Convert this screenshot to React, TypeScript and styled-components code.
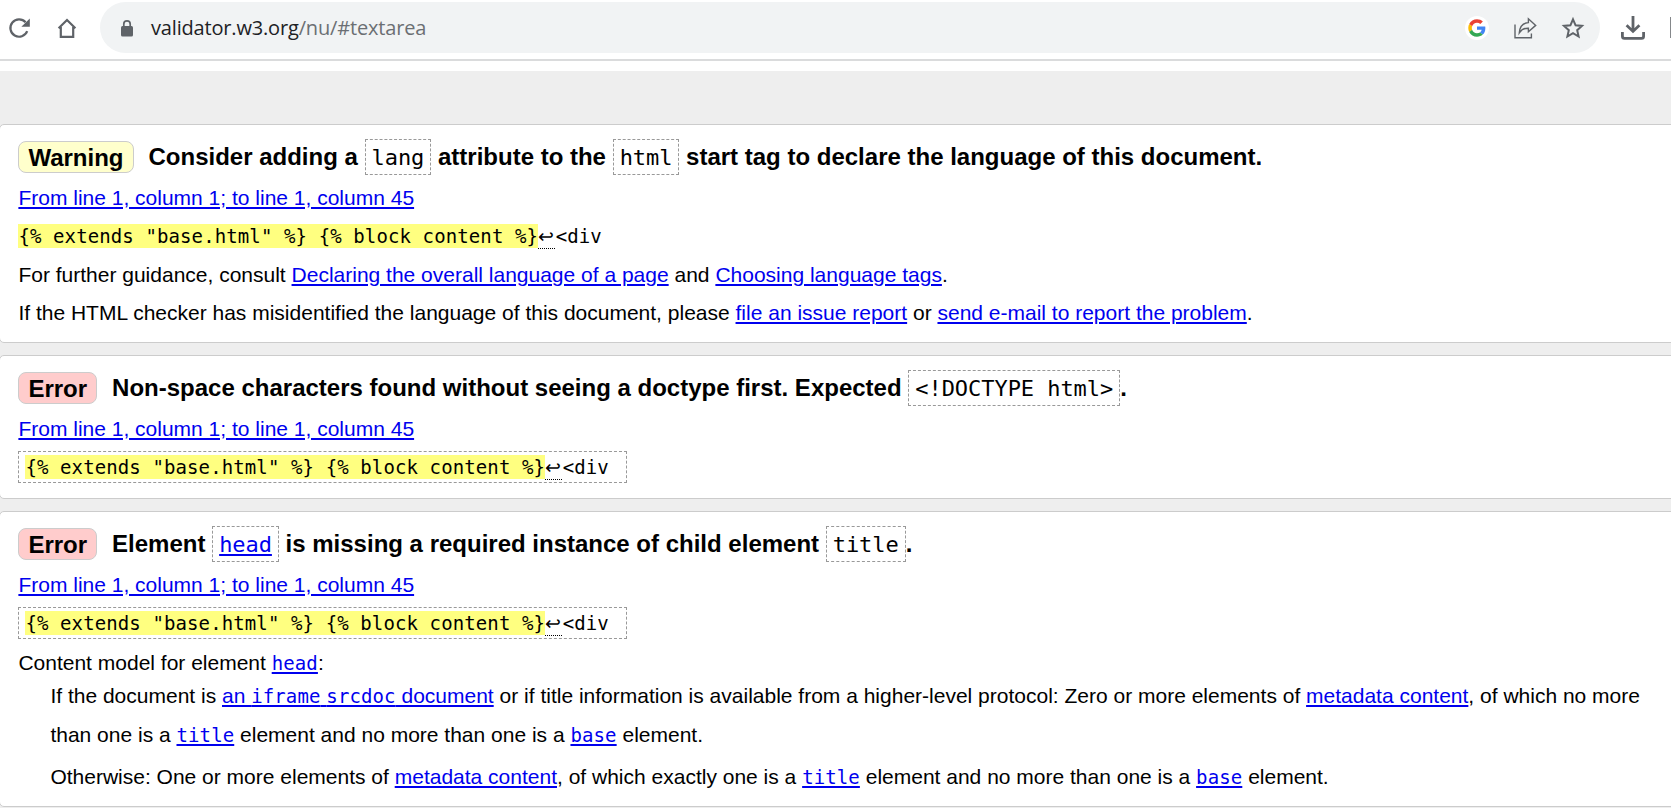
import React from "react";
import styled, { createGlobalStyle } from "styled-components";

const Global = createGlobalStyle`
  html, body { margin: 0; padding: 0; }
  body {
    background: #eee;
    color: #000;
    font-family: "Liberation Sans", Arial, sans-serif;
    font-size: 21px;
    overflow: hidden;
  }
`;

const Toolbar = styled.header`
  display: flex;
  align-items: center;
  height: 59px;
  box-sizing: border-box;
  padding: 2px 0 6px 7px;
  background: #fff;
  overflow: hidden;
`;

const Divider = styled.div`
  height: 10px;
  border-top: 2px solid #dadbdc;
  background: #fff;
`;

const ToolIcon = styled.svg<{ $gap?: number }>`
  display: block;
  flex: none;
  margin-left: ${(p) => p.$gap ?? 0}px;
`;

const AddressBar = styled.div`
  display: flex;
  align-items: center;
  flex: none;
  width: 1500px;
  height: 51px;
  margin-left: 22px;
  padding: 0 15px 0 18px;
  box-sizing: border-box;
  border-radius: 26px;
  background: #f1f3f4;
`;

const Url = styled.div`
  flex: 1;
  margin-left: 17px;
  font-family: "Open Sans", "Noto Sans", sans-serif;
  font-size: 20px;
  line-height: 50px;
  color: #202124;
  letter-spacing: -0.17px;
`;

const UrlPath = styled.span`
  color: #6b6f73;
`;

const NextButtonEdge = styled.span`
  flex: none;
  width: 1px;
  height: 21px;
  margin-left: 25px;
  background: #85888b;
`;

const Results = styled.main`
  display: flex;
  flex-direction: column;
  gap: 12px;
  padding-top: 53px;
`;

const Message = styled.section<{ $bottom: number }>`
  margin: 0 -10px 0 -1px;
  padding: 7px 27px ${(p) => p.$bottom}px 18.4px;
  border: 1px solid #ccc;
  border-radius: 5px;
  background: #fff;
`;

const Heading = styled.h2`
  margin: 0;
  height: 50px;
  font-size: 24px;
  line-height: 50px;
  font-weight: bold;
  white-space: nowrap;
`;

const Badge = styled.span<{ $kind: "warning" | "error" }>`
  display: inline-block;
  box-sizing: border-box;
  height: 32px;
  margin-right: 15px;
  padding: 0 9px;
  border: 1px solid #ccc;
  border-radius: 8px;
  line-height: 31px;
  vertical-align: -1px;
  background: ${(p) => (p.$kind === "warning" ? "#ffc" : "#fcc")};
`;

const HeadingCode = styled.code`
  display: inline-block;
  box-sizing: border-box;
  height: 36px;
  padding: 1px 6px 0;
  border: 1px dashed #999;
  font: 22px/34px "DejaVu Sans Mono", monospace;
  letter-spacing: -0.05px;
`;

const Link = styled.a`
  color: #00e;
  text-decoration: underline;
  text-decoration-thickness: 2px;
  text-underline-offset: 2px;
`;

const Location = styled.p`
  margin: 0;
  line-height: 31px;
`;

const Snippet = styled.div<{ $boxed?: boolean }>`
  box-sizing: border-box;
  width: 609px;
  height: ${(p) => (p.$boxed ? 32 : 30)}px;
  margin: ${(p) => (p.$boxed ? "7px 0 0" : "8px 0 5px")};
  padding: ${(p) => (p.$boxed ? "0 6px" : "0")};
  border: ${(p) => (p.$boxed ? "1px dashed #999" : "0")};
  font: 19px/30px "DejaVu Sans Mono", monospace;
  letter-spacing: 0.11px;
  white-space: pre;
`;

const Mark = styled.span`
  display: inline-block;
  height: 24px;
  line-height: 24px;
  background: #ffff80;
`;

const LineBreak = styled.span`
  display: inline-block;
  box-sizing: border-box;
  width: 17px;
  height: 25px;
  margin: 3px 0.6px 0 0;
  border-bottom: 1px dotted #000;
  font-family: "DejaVu Sans", sans-serif;
  font-weight: 200;
  line-height: 24px;
  letter-spacing: 0;
  vertical-align: top;
`;

const Paragraph = styled.p`
  margin: 0;
  line-height: 38px;
`;

const Model = styled.dl`
  margin: 10px 0 0;
`;

const Term = styled.dt`
  line-height: 27px;
`;

const Definition = styled.dd<{ $top?: number }>`
  margin: ${(p) => p.$top ?? 0}px 0 0 32px;
  line-height: 39px;
`;

const Code = styled.code`
  font: 19px/1 "DejaVu Sans Mono", monospace;
  letter-spacing: 0.11px;
`;

const From = () => (
  <Location>
    <Link>From line 1, column 1; to line 1, column 45</Link>
  </Location>
);

const Extract = ({ boxed }: { boxed?: boolean }) => (
  <Snippet $boxed={boxed}>
    <Mark>{'{% extends "base.html" %} {% block content %}'}</Mark>
    <LineBreak>↩</LineBreak>
    {"<div"}
  </Snippet>
);

const CodeLink = ({ children }: { children: React.ReactNode }) => (
  <Link>
    <Code>{children}</Code>
  </Link>
);

const Chrome = () => (
  <Toolbar>
    <ToolIcon width="24" height="24" viewBox="0 0 24 24">
      <path d="M20.2 15.2A8.7 8.7 0 1 1 18.6 6.2" fill="none" stroke="#5f6368" strokeWidth="2.2" />
      <path d="M22.8 2.4V10.8H14.4Z" fill="#5f6368" />
    </ToolIcon>
    <ToolIcon $gap={25} width="22" height="22" viewBox="0 0 22 22">
      <path d="M2.6 11.2 11 3 19.4 11.2M4.8 10V19.8H17.2V10" fill="none" stroke="#5f6368" strokeWidth="2.2" />
    </ToolIcon>
    <AddressBar>
      <ToolIcon $gap={2} width="14" height="18" viewBox="0 0 14 18">
        <rect x="1" y="7" width="12" height="10.5" rx="1.5" fill="#5f6368" />
        <path d="M3.8 8V5a3.2 3.2 0 0 1 6.4 0v3" fill="none" stroke="#5f6368" strokeWidth="1.7" />
      </ToolIcon>
      <Url>
        validator.w3.org<UrlPath>/nu/#textarea</UrlPath>
      </Url>
      <ToolIcon width="24" height="24" viewBox="-9 -9 66 66">
        <circle cx="24" cy="24" r="33" fill="#fff" />
        <path fill="#EA4335" d="M24 9.5c3.54 0 6.71 1.22 9.21 3.6l6.85-6.85C35.9 2.38 30.47 0 24 0 14.62 0 6.51 5.38 2.56 13.22l7.98 6.19C12.43 13.72 17.74 9.5 24 9.5z" />
        <path fill="#4285F4" d="M46.98 24.55c0-1.57-.15-3.09-.38-4.55H24v9.02h12.94c-.58 2.96-2.26 5.48-4.78 7.18l7.73 6c4.51-4.18 7.09-10.36 7.09-17.65z" />
        <path fill="#FBBC05" d="M10.53 28.59c-.48-1.45-.76-2.99-.76-4.59s.27-3.14.76-4.59l-7.98-6.19C.92 16.46 0 20.12 0 24c0 3.88.92 7.54 2.56 10.78l7.97-6.19z" />
        <path fill="#34A853" d="M24 48c6.48 0 11.93-2.13 15.89-5.81l-7.73-6c-2.15 1.45-4.92 2.3-8.16 2.3-6.26 0-11.57-4.22-13.47-9.91l-7.98 6.19C6.51 42.62 14.62 48 24 48z" />
      </ToolIcon>
      <ToolIcon $gap={24} width="24" height="24" viewBox="0 0 24 24">
        <path d="M2 8.5V21.8H18.4V17.5" fill="none" stroke="#5f6368" strokeWidth="1.4" />
        <path d="M6.3 16.8C6.8 10.6 10 7 15.4 6.6V2.8L22.7 9.4 15.4 15.8V12.2C11.2 12 8.6 13.4 6.3 16.8Z" fill="none" stroke="#5f6368" strokeWidth="1.4" />
      </ToolIcon>
      <ToolIcon $gap={24} width="24" height="24" viewBox="0 0 24 24">
        <path d="M12 3.3 14.6 9.3 21 9.9 16.2 14.2 17.6 20.5 12 17.2 6.4 20.5 7.8 14.2 3 9.9 9.4 9.3Z" fill="none" stroke="#5f6368" strokeWidth="2" />
      </ToolIcon>
    </AddressBar>
    <ToolIcon $gap={21} width="24" height="24" viewBox="0 0 24 24">
      <path d="M12 0V15M5.6 9.2 12 15.4 18.4 9.2" fill="none" stroke="#5f6368" strokeWidth="2.8" />
      <path d="M1.4 16V20.3Q1.4 22.4 3.5 22.4H20.5Q22.6 22.4 22.6 20.3V16" fill="none" stroke="#5f6368" strokeWidth="2.8" />
    </ToolIcon>
    <NextButtonEdge />
  </Toolbar>
);

export default function App() {
  return (
    <>
      <Global />
      <Chrome />
      <Divider />
      <Results>
        <Message $bottom={10}>
          <Heading>
            <Badge $kind="warning">Warning</Badge>
            Consider adding a <HeadingCode>lang</HeadingCode> attribute to the{" "}
            <HeadingCode>html</HeadingCode> start tag to declare the language of this document.
          </Heading>
          <From />
          <Extract />
          <Paragraph>
            For further guidance, consult <Link>Declaring the overall language of a page</Link> and{" "}
            <Link>Choosing language tags</Link>.
          </Paragraph>
          <Paragraph>
            If the HTML checker has misidentified the language of this document, please{" "}
            <Link>file an issue report</Link> or <Link>send e-mail to report the problem</Link>.
          </Paragraph>
        </Message>
        <Message $bottom={15}>
          <Heading>
            <Badge $kind="error">Error</Badge>
            Non-space characters found without seeing a doctype first. Expected{" "}
            <HeadingCode>{"<!DOCTYPE html>"}</HeadingCode>.
          </Heading>
          <From />
          <Extract boxed />
        </Message>
        <Message $bottom={10}>
          <Heading>
            <Badge $kind="error">Error</Badge>
            Element{" "}
            <HeadingCode>
              <Link>head</Link>
            </HeadingCode>{" "}
            is missing a required instance of child element <HeadingCode>title</HeadingCode>.
          </Heading>
          <From />
          <Extract boxed />
          <Model>
            <Term>
              Content model for element <CodeLink>head</CodeLink>:
            </Term>
            <Definition>
              If the document is{" "}
              <Link>
                an <Code>iframe</Code> <Code>srcdoc</Code> document
              </Link>{" "}
              or if title information is available from a higher-level protocol: Zero or more elements of{" "}
              <Link>metadata content</Link>, of which no more than one is a <CodeLink>title</CodeLink> element and no
              more than one is a <CodeLink>base</CodeLink> element.
            </Definition>
            <Definition $top={3}>
              Otherwise: One or more elements of <Link>metadata content</Link>, of which exactly one is a{" "}
              <CodeLink>title</CodeLink> element and no more than one is a <CodeLink>base</CodeLink> element.
            </Definition>
          </Model>
        </Message>
      </Results>
    </>
  );
}
